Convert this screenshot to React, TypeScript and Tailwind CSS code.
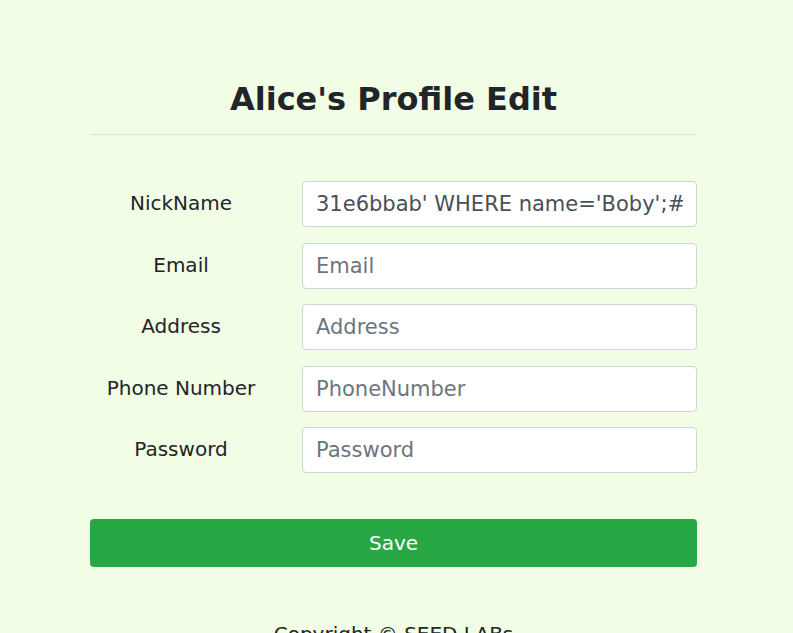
import React from "react";

const fields = [
  { label: "NickName", placeholder: "NickName", value: "31e6bbab' WHERE name='Boby';#" },
  { label: "Email", placeholder: "Email", value: "" },
  { label: "Address", placeholder: "Address", value: "" },
  { label: "Phone Number", placeholder: "PhoneNumber", value: "" },
  { label: "Password", placeholder: "Password", value: "" },
];

export default function App() {
  return (
    <div
      className="min-h-[633px] bg-[#f2fde5] text-[#212529]"
      style={{ fontFamily: '"DejaVu Sans", sans-serif' }}
    >
      <div className="ml-[90px] w-[607px] pt-[80px]">
        <h2 className="text-center text-[32px] font-bold leading-[38px]">
          Alice's Profile Edit
        </h2>
        <hr className="mt-[16px] border-t border-[#dcdfd8]" />

        <form className="mt-[46px] flex flex-col gap-[15.5px]">
          {fields.map((field) => (
            <div key={field.label} className="flex items-center">
              <label className="w-[182px] pb-[2px] text-center text-[20px]">
                {field.label}
              </label>
              <input
                type="text"
                defaultValue={field.value}
                placeholder={field.placeholder}
                className="ml-[30px] h-[46px] flex-1 rounded-[4px] border border-[#ced4da] bg-white px-[13px] text-[21px] text-[#495057] outline-none placeholder:text-[#6c757d]"
              />
            </div>
          ))}
        </form>

        <button
          type="button"
          className="mt-[46px] h-[48px] w-full rounded-[4px] bg-[#28a745] text-[20px] text-white"
        >
          Save
        </button>

        <p className="mt-[52px] text-center text-[20px]">Copyright © SEED LABs</p>
      </div>
    </div>
  );
}
